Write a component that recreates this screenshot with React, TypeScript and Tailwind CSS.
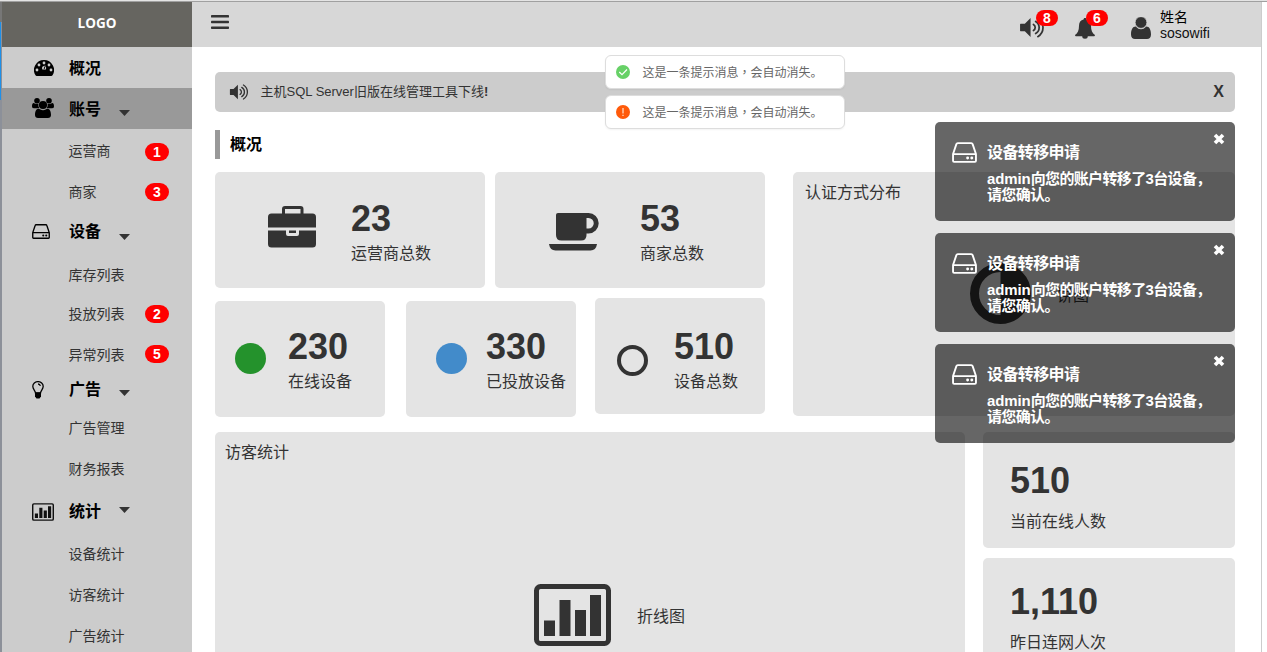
import type { ReactNode } from "react";

function SpeakerIcon({ className }: { className: string }) {
  return (
    <svg viewBox="0 0 25 22" className={className} fill="none" stroke="currentColor" strokeWidth="1.8" strokeLinecap="round">
      <path d="M.5 7H5l6-6v20l-6-6H.5a.5.5 0 0 1-.5-.5v-7A.5.5 0 0 1 .5 7z" fill="currentColor" stroke="none" />
      <path d="M14 7.8a3.7 3.7 0 0 1 0 6.4M16.3 4.6a7.4 7.4 0 0 1 0 12.8M18.6 1.4a11.2 11.2 0 0 1 0 19.2" />
    </svg>
  );
}

function GaugeIcon() {
  return (
    <svg viewBox="0 0 20 16" className="h-4 w-5">
      <path d="M10 0a10 10 0 0 1 8.5 15.3q-.4.7-1.2.7H2.700q-.8 0-1.200-.7A10 10 0 0 1 10 0z" fill="#000" />
      <g fill="#ccc">
        <circle cx="3" cy="10" r="1.4" />
        <circle cx="5" cy="5" r="1.4" />
        <circle cx="10" cy="3" r="1.4" />
        <circle cx="15" cy="5" r="1.4" />
        <circle cx="17" cy="10" r="1.4" />
        <path d="M11.600 5.700l-1.300 4.400a2.100 2.100 0 1 0-.9-.1l1.300-4.500z" />
      </g>
      <circle cx="10" cy="12.100" r="1.300" fill="#000" />
    </svg>
  );
}

function UsersIcon() {
  return (
    <svg viewBox="0 0 22 20" className="-mt-0.5 h-5 w-[22px]" fill="#000">
      <circle cx="5" cy="2.800" r="2.800" />
      <circle cx="17" cy="2.800" r="2.800" />
      <path d="M6.300 10.300H2.200Q0 10.300 0 8.400C0 6.500.5 5 1.700 5c.5 0 1.500 1.100 3.300 1.100h1.400a5 5 0 0 0 .9 4.200zM15.700 10.300h4.100q2.200 0 2.200-1.900C22 6.500 21.500 5 20.300 5c-.5 0-1.500 1.100-3.300 1.100h-1.400a5 5 0 0 1-.9 4.200z" />
      <circle cx="11" cy="7" r="4.100" />
      <path d="M6.500 10.800C7.500 10.800 9 12.200 11 12.200s3.500-1.400 4.500-1.400c2.600 0 3.500 3.300 3.500 6.200 0 1.800-1.200 3-3 3H6c-1.800 0-3-1.200-3-3 0-2.900.9-6.200 3.500-6.200z" />
    </svg>
  );
}

function DriveIcon({ className }: { className: string }) {
  return (
    <svg viewBox="0 0 24 20" className={className} fill="none" stroke="currentColor" strokeWidth="1.8" strokeLinejoin="round">
      <path d="M1 11.500 4.200 2Q4.500 1 5.500 1h13q1 0 1.300 1L23 11.500V18q0 1-1 1H2q-1 0-1-1zM1 11.500h22" />
      <circle cx="15" cy="15.300" r="1.400" fill="currentColor" stroke="none" />
      <circle cx="19" cy="15.300" r="1.400" fill="currentColor" stroke="none" />
    </svg>
  );
}

function BulbIcon() {
  return (
    <svg viewBox="0 0 12 18" className="h-[18px] w-3" fill="none" stroke="#000" strokeWidth="1.300">
      <path d="M3.500 12C3.300 9.500.8 8.300.8 5.300a5.200 4.700 0 0 1 10.400 0c0 3-2.500 4.200-2.700 6.700zM6 3q2 0 2.300 2" />
      <path d="M3 11.500h6v4L7.500 17.500h-3L3 15.500z" fill="#000" stroke="none" />
    </svg>
  );
}

function ChartIcon({ className, color = "#333" }: { className: string; color?: string }) {
  return (
    <svg viewBox="0 0 77 62" className={className}>
      <rect x="2.500" y="2.500" width="72" height="57" rx="4" fill="none" stroke={color} strokeWidth="5" />
      <path d="M10 36.500h11v15.500H10zM25.500 16h11v36h-11zM41 26h11v26H41zM56 11h11v41H56z" fill={color} />
    </svg>
  );
}

function BriefcaseIcon() {
  return (
    <svg viewBox="0 0 48 42" className="h-[42px] w-12">
      <path d="M15.500 9V3q0-1.500 1.500-1.500h15.500Q34 1.500 34 3v6" fill="none" stroke="#333" strokeWidth="3" />
      <path d="M0 21.500V11q0-3.500 3.500-3.500h41Q48 7.500 48 11v10.500zM0 24.500h18v3.500q0 2 2 2h9q2 0 2-2v-3.500h17V38q0 3.500-3.500 3.500h-41Q0 41.500 0 38z" fill="#333" />
      <path d="M21 24.500h7V27h-7z" fill="#333" />
    </svg>
  );
}

function CoffeeIcon() {
  return (
    <svg viewBox="0 0 50 38" className="h-[38px] w-[50px]" fill="#333">
      <path fillRule="evenodd" d="M9 0h30.500a10.200 10.200 0 0 1 0 20.400H37.500V22q0 5.500-5.500 5.500H12.500Q7 27.500 7 22V2q0-2 2-2zM37.500 5v10.500h2a5.250 5.250 0 0 0 0-10.500z" />
      <path d="M0 31h48q-1 6.500-6.500 6.500h-35Q1 37.500 0 31z" />
    </svg>
  );
}

function BellIcon() {
  return (
    <svg viewBox="0 0 20 21" className="h-[21px] w-5" fill="#333">
      <path d="M10 0c.9 0 1.500.6 1.400 1.600 3 .7 4.600 2.900 4.600 6.100 0 4.900 1.300 7.600 4 9.300 0 .8-.6 1.300-1.400 1.300H1.400C.6 18.300 0 17.800 0 17c2.700-1.700 4-4.400 4-9.300 0-3.200 1.600-5.400 4.600-6.100C8.500.6 9.100 0 10 0zM7.200 18.300h5.600a2.800 2.500 0 0 1-5.600 0z" />
    </svg>
  );
}

function UserIcon() {
  return (
    <svg viewBox="0 0 20 22" className="h-[22px] w-5" fill="#333">
      <path d="M4.800 9.500C6 10.900 8 12.300 10 12.300s4-1.400 5.200-2.800c3.300 0 4.800 3.500 4.800 8 0 3-1.700 4.500-4 4.500H4c-2.300 0-4-1.500-4-4.500 0-4.500 1.500-8 4.800-8z" />
      <circle cx="10" cy="5.500" r="5.900" stroke="#d7d7d7" strokeWidth=".8" />
    </svg>
  );
}

function Caret({ className }: { className: string }) {
  return (
    <svg viewBox="0 0 11 6" className={`absolute left-[117px] h-1.5 w-[11px] ${className}`} fill="#333">
      <path d="M0 0h11L5.500 6z" />
    </svg>
  );
}

function Pill({ children }: { children: ReactNode }) {
  return <span className="flex h-[18px] w-6 items-center justify-center rounded-full bg-[#f00] text-sm leading-none font-bold text-white">{children}</span>;
}

function SubItem({ label, gap, badge, badgeGap = "" }: { label: string; gap: string; badge?: number; badgeGap?: string }) {
  return (
    <div className={`flex h-5 shrink-0 items-center pl-[66.5px] text-sm leading-5 text-[#333] ${gap}`}>
      <span className="w-[76.5px]">{label}</span>
      {badge && <span className={badgeGap}><Pill>{badge}</Pill></span>}
    </div>
  );
}

function Group({ label, icon, gap, caret, className = "h-5" }: { label: string; icon: ReactNode; gap: string; caret?: string; className?: string }) {
  return (
    <div className={`relative flex shrink-0 items-center text-base leading-5 font-bold text-black ${className} ${gap}`}>
      <span className="flex w-[67px] pl-[30px]">{icon}</span>
      <span className="pt-0.5">{label}</span>
      {caret && <Caret className={caret} />}
    </div>
  );
}

function Sidebar() {
  return (
    <aside className="flex w-[190px] shrink-0 flex-col overflow-hidden bg-[#ccc]">
      <div className="flex h-[45px] shrink-0 items-center justify-center bg-[#666560] pb-[3px] font-['Open_Sans'] text-[13.5px] font-bold text-white">LOGO</div>
      <Group label="概况" className="h-[41px]" gap="" icon={<span className="pl-0.5"><GaugeIcon /></span>} />
      <Group label="账号" className="h-[41px] bg-[#999]" gap="" caret="top-[22px]" icon={<UsersIcon />} />
      <SubItem label="运营商" gap="mt-3" badge={1} badgeGap="mt-0.5" />
      <SubItem label="商家" gap="mt-[21px]" badge={3} />
      <Group label="设备" gap="mt-[19px]" caret="top-[13px]" icon={<DriveIcon className="h-[15px] w-[18px]" />} />
      <SubItem label="库存列表" gap="mt-6" />
      <SubItem label="投放列表" gap="mt-[19px]" badge={2} />
      <SubItem label="异常列表" gap="mt-[21px]" badge={5} badgeGap="-mt-0.5" />
      <Group label="广告" gap="mt-3.5" caret="top-[11px]" icon={<span className="pt-0.5"><BulbIcon /></span>} />
      <SubItem label="广告管理" gap="mt-[19px]" />
      <SubItem label="财务报表" gap="mt-[21px]" />
      <Group label="统计" gap="mt-[22px]" caret="top-1.5" icon={<span className="pt-0.5"><ChartIcon className="h-[18px] w-[22px]" color="#111" /></span>} />
      <SubItem label="设备统计" gap="mt-[23px]" />
      <SubItem label="访客统计" gap="mt-[21px]" />
      <SubItem label="广告统计" gap="mt-[21px]" />
    </aside>
  );
}

function TopBar() {
  return (
    <header className="flex h-[45px] shrink-0 bg-[#d7d7d7]">
      <svg viewBox="0 0 18 14" className="mt-[13px] ml-[19px] h-3.5 w-[18px]" fill="#333">
        <rect width="18" height="2.600" rx=".7" />
        <rect y="5.700" width="18" height="2.600" rx=".7" />
        <rect y="11.400" width="18" height="2.600" rx=".7" />
      </svg>
      <div className="relative mt-[15px] ml-[791px] h-[22px] w-[25px] text-[#333]">
        <SpeakerIcon className="h-[21px] w-6" />
        <span className="absolute -top-[7px] left-4 flex h-4 w-[22px] items-center justify-center rounded-full bg-[#f00] text-sm font-bold text-white">8</span>
      </div>
      <div className="relative mt-4 ml-[30px] w-5">
        <BellIcon />
        <span className="absolute -top-2 left-[11px] flex h-4 w-[22px] items-center justify-center rounded-full bg-[#f00] text-sm font-bold text-white">6</span>
      </div>
      <div className="mt-[15px] ml-9"><UserIcon /></div>
      <div className="mt-[7px] ml-[9px] text-sm leading-4 text-black">
        <div>姓名</div>
        <div className="text-[#111]">sosowifi</div>
      </div>
    </header>
  );
}

function Stat({ value, label, textClass, className, children }: { value: string; label: string; textClass: string; className: string; children?: ReactNode }) {
  return (
    <div className={`flex h-[116px] shrink-0 rounded-[5px] bg-[#e4e4e4] text-[#333] ${className}`}>
      {children}
      <div className={textClass}>
        <div className="h-9 text-4xl leading-9 font-bold">{value}</div>
        <div className="text-base leading-5 whitespace-nowrap">{label}</div>
      </div>
    </div>
  );
}

function Dot({ className }: { className: string }) {
  return <div className={`size-[31px] shrink-0 rounded-full ${className}`} />;
}

function Toast({ ok }: { ok: boolean }) {
  return (
    <div className="flex h-[34px] w-[240px] items-center rounded-md border border-[#ddd] bg-white pl-2.5 text-xs text-[#666] shadow-xs">
      <svg viewBox="0 0 14 14" className="size-3.5">
        <circle cx="7" cy="7" r="7" fill={ok ? "#67d167" : "#ff5a0a"} />
        {ok ? <path d="M3.300 7 6 9.600 11 4.500" fill="none" stroke="#fff" strokeWidth="1.200" /> : <path d="M7 3v5.600M7 9.800v1.200" stroke="#ffd0b5" strokeWidth="1.400" />}
      </svg>
      <span className="ml-[12.5px] pt-0.5">
        这是一条提示消息<span className="font-['Noto_Sans_CJK_TC',sans-serif] leading-none">，</span>会自动消失。
      </span>
    </div>
  );
}

function Notification() {
  return (
    <div className="flex h-[99px] w-[300px] rounded-[5px] bg-black/60 font-bold text-white">
      <DriveIcon className="mt-[19.5px] ml-[16.5px] h-[21px] w-[25px]" />
      <div className="ml-[10.500px] w-[222px] pt-[21px]">
        <div className="text-base leading-5 tracking-[-0.6px]">设备转移申请</div>
        <div className="mt-2 text-[15px] leading-4 tracking-[-0.65px] whitespace-nowrap">
          <span className="tracking-[-0.1px]">admin</span>向您的账户转移了3台设备，
          <br />
          请您确认。
        </div>
      </div>
      <svg viewBox="0 0 12 12" className="mt-[11px] ml-1 size-3">
        <path d="M2 2l8 8M10 2l-8 8" stroke="#fff" strokeWidth="3.600" />
      </svg>
    </div>
  );
}

function Overview() {
  return (
    <div className="flex flex-col px-[23px] pt-[25px]">
      <div className="flex h-10 w-[1020px] shrink-0 items-center rounded-[5px] bg-[#ccc] pl-3.5 text-[13px] text-[#333]">
        <SpeakerIcon className="h-4 w-5" />
        <span className="ml-[11.500px]">主机SQL Server旧版在线管理工具下线<b>!</b></span>
        <span className="mr-[11px] ml-auto text-base font-bold">X</span>
      </div>
      <h1 className="mt-[18px] flex h-[29px] shrink-0 items-center border-l-[5px] border-[#999] pl-2.5 text-base font-bold text-black">概况</h1>

      <div className="mt-[13px] flex h-[245px] shrink-0">
        <div className="w-[550px]">
          <div className="flex gap-2.5">
            <Stat value="23" label="运营商总数" className="w-[270px] pl-[53px]" textClass="ml-[35px] pt-[29px] [&>div:last-child]:mt-[7px]">
              <div className="pt-[34px]"><BriefcaseIcon /></div>
            </Stat>
            <Stat value="53" label="商家总数" className="w-[270px] pl-[54px]" textClass="ml-[41px] pt-[29px] [&>div:last-child]:mt-[7px]">
              <div className="pt-[41px]"><CoffeeIcon /></div>
            </Stat>
          </div>
          <div className="mt-2.5 flex">
            <Stat value="230" label="在线设备" className="mt-[3px] w-[170px] pl-5" textClass="ml-[22px] pt-[28px] [&>div:last-child]:mt-[7px]">
              <Dot className="mt-[42px] bg-[#24922c]" />
            </Stat>
            <Stat value="330" label="已投放设备" className="mt-[3px] ml-[21px] w-[170px] pl-[30px]" textClass="ml-[19px] pt-[28px] [&>div:last-child]:mt-[7px]">
              <Dot className="mt-[42px] bg-[#428bca]" />
            </Stat>
            <Stat value="510" label="设备总数" className="ml-[19px] w-[170px] pl-[22px]" textClass="ml-[26px] pt-[31px] [&>div:last-child]:mt-[7px]">
              <Dot className="mt-[47px] border-4 border-[#333]" />
            </Stat>
          </div>
        </div>
        <section className="ml-7 h-[244px] w-[442px] rounded-[5px] bg-[#e4e4e4] text-base text-[#333]">
          <h2 className="pt-[11px] pl-3 leading-5">认证方式分布</h2>
          <div className="mt-[60px] ml-[177px] flex items-center gap-[26px]">
            <svg viewBox="0 0 61 61" className="size-[61px]">
              <circle cx="30.500" cy="30.500" r="26" fill="none" stroke="#333" strokeWidth="9" />
              <path d="M30.500 6a24.500 24.500 0 0 1 0 49z" fill="#333" />
            </svg>
            <span className="pt-1">饼图</span>
          </div>
        </section>
      </div>

      <div className="mt-[15px] flex gap-[18px]">
        <section className="h-[300px] w-[750px] shrink-0 rounded-[5px] bg-[#e4e4e4] text-base text-[#333]">
          <h2 className="pt-[11px] pl-2.5 leading-5">访客统计</h2>
          <div className="mt-[121px] ml-[319px] flex items-center gap-[26px]">
            <ChartIcon className="h-[62px] w-[77px]" />
            <span className="pt-1">折线图</span>
          </div>
        </section>
        <div className="flex flex-col gap-2.5">
          <Stat value="510" label="当前在线人数" className="w-[252px]" textClass="ml-[27px] pt-[31px] [&>div:last-child]:mt-[13px]" />
          <Stat value="1,110" label="昨日连网人次" className="w-[252px]" textClass="ml-[27px] pt-[26px] [&>div:last-child]:mt-[13px]" />
        </div>
      </div>
    </div>
  );
}

export default function App() {
  return (
    <div className="relative flex h-[652px] w-[1267px] flex-col overflow-hidden bg-white font-['Liberation_Sans','Noto_Sans_CJK_SC',sans-serif]">
      <div className="h-0.5 shrink-0 border-b border-[#a0a0a0] bg-[#e4e4e4]" />
      <div className="flex min-h-0 flex-1">
        <div className="flex w-0.5 shrink-0 flex-col bg-[#8c9099]">
          <div className="h-5 bg-[#777]" />
          <div className="h-[78px] w-px bg-[#1e90e8]" />
        </div>
        <Sidebar />
        <main className="w-[1070px] shrink-0 overflow-hidden border-r border-[#ccc]">
          <TopBar />
          <Overview />
        </main>
      </div>
      <div className="absolute top-[55px] left-[605px] flex flex-col gap-1.5">
        <Toast ok />
        <Toast ok={false} />
      </div>
      <div className="absolute top-[122px] left-[935px] flex flex-col gap-3">
        <Notification />
        <Notification />
        <Notification />
      </div>
    </div>
  );
}
